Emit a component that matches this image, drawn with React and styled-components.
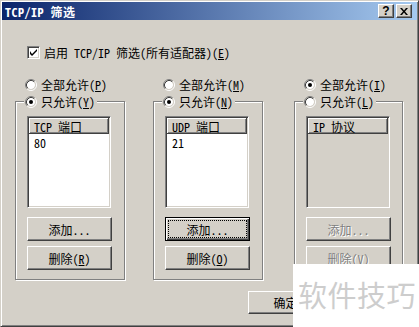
import React from 'react';
import styled, { createGlobalStyle, css } from 'styled-components';

const FACE = '#d4d0c8';
const FONT = `"Noto Sans Mono CJK SC", "Noto Sans CJK SC", "Liberation Mono", monospace`;

const GlobalStyle = createGlobalStyle`
  html, body {
    margin: 0;
    padding: 0;
    background: ${FACE};
  }
  body {
    width: 419px;
    height: 327px;
    overflow: hidden;
  }
`;

const Window = styled.div`
  position: relative;
  box-sizing: border-box;
  width: 419px;
  height: 327px;
  padding: 1px;
  background: ${FACE};
  border: 1px solid;
  border-color: ${FACE} #404040 #404040 ${FACE};
  box-shadow: inset 1px 1px #fff, inset -1px -1px #808080;
  font-family: ${FONT};
  font-size: 12px;
  line-height: 13px;
  color: #000;
  display: flex;
  flex-direction: column;
`;

const TitleBar = styled.div`
  height: 18px;
  flex: none;
  display: flex;
  align-items: center;
  padding: 0 5px 0 3px;
  background: linear-gradient(to right, #0a246a, #a6caf0);
`;

const Title = styled.div`
  flex: 1;
  color: #fff;
  font-weight: bold;
  letter-spacing: 0.5px;
`;

const CaptionButton = styled.div`
  box-sizing: border-box;
  width: 16px;
  height: 14px;
  margin-left: 2px;
  background: ${FACE};
  border: 1px solid;
  border-color: #fff #404040 #404040 #fff;
  box-shadow: inset -1px -1px #808080;
  display: flex;
  align-items: center;
  justify-content: center;
  font-family: "Liberation Sans", sans-serif;
  font-weight: bold;
  font-size: 12px;
  line-height: 12px;
`;

const CheckRow = styled.div`
  display: flex;
  align-items: center;
  gap: 4px;
  margin: 26px 0 0 25px;
  height: 13px;
`;

const CheckBox = styled.div`
  box-sizing: border-box;
  width: 13px;
  height: 13px;
  background: #fff;
  border: 1px solid;
  border-color: #808080 #fff #fff #808080;
  box-shadow: inset 1px 1px #404040, inset -1px -1px ${FACE};
  display: flex;
  align-items: center;
  justify-content: center;
`;

const Columns = styled.div`
  display: flex;
  align-items: flex-start;
  margin-top: 19px;
`;

const Column = styled.div`
  box-sizing: border-box;
  width: ${(p) => p.$width}px;
  margin-left: ${(p) => p.$offset}px;
  display: flex;
  flex-direction: column;
`;

const RadioLine = styled.label`
  display: flex;
  align-items: center;
  gap: 4px;
  height: 13px;
  white-space: nowrap;
`;

const TopRadio = styled(RadioLine)`
  margin-left: 10px;
`;

const Group = styled.fieldset`
  box-sizing: border-box;
  margin: 4px 0 0 0;
  padding: 0 12px 9px 11px;
  min-width: 0;
  border: 1px solid #808080;
  box-shadow: inset 1px 1px #fff, 1px 1px #fff;
  display: flex;
  flex-direction: column;
`;

const Legend = styled.legend`
  margin-left: -3px;
  padding: 0 2px 0 1px;
  background: ${FACE};
  line-height: 13px;
`;

const ListBox = styled.div`
  box-sizing: border-box;
  width: 84px;
  height: 92px;
  margin-top: 8px;
  border: 1px solid;
  border-color: #808080 #fff #fff #808080;
  box-shadow: inset 1px 1px #404040, inset -1px -1px ${FACE};
  background: ${(p) => (p.$disabled ? FACE : '#fff')};
  padding: 1px;
  display: flex;
  flex-direction: column;
`;

const ListHeader = styled.div`
  box-sizing: border-box;
  height: 16px;
  padding: 1px 0 0 5px;
  background: ${FACE};
  border-right: 1px solid #404040;
  border-bottom: 1px solid #404040;
  box-shadow: inset 1px 1px #fff, inset -1px -1px #808080;
  display: flex;
  align-items: center;
`;

const ListRow = styled.div`
  height: 14px;
  padding: 1px 0 0 5px;
  display: flex;
  align-items: center;
`;

const Button = styled.div`
  position: relative;
  box-sizing: border-box;
  width: ${(p) => p.$width || 85}px;
  height: ${(p) => p.$height || 24}px;
  margin-top: ${(p) => p.$top || 0}px;
  background: ${FACE};
  border: 1px solid;
  border-color: #fff #404040 #404040 #fff;
  box-shadow: inset -1px -1px #808080;
  display: flex;
  align-items: center;
  justify-content: center;
  white-space: nowrap;
  ${(p) =>
    p.$disabled &&
    css`
      color: #808080;
      text-shadow: 1px 1px #fff;
    `}
  ${(p) =>
    p.$focused &&
    css`
      border: 1px solid #000;
      box-shadow: inset 1px 1px #fff, inset -1px -1px #404040, inset -2px -2px #808080;
    `}
`;

const FocusRing = styled.span`
  box-sizing: border-box;
  width: 77px;
  height: 16px;
  padding-top: 1px;
  outline: 1px dotted #000;
  display: flex;
  align-items: center;
  justify-content: center;
`;

const ButtonRow = styled.div`
  display: flex;
  margin-top: 11px;
  padding-left: 246px;
`;

const Watermark = styled.div`
  position: absolute;
  left: 292px;
  top: 263px;
  right: -1px;
  bottom: -1px;
  background: #fff;
  display: flex;
  align-items: center;
  padding: 0 0 2px 5px;
  font-family: "Noto Sans CJK SC", sans-serif;
  font-size: 29px;
  line-height: 1;
  letter-spacing: 0.5px;
  color: #cdcdcd;
`;

function Accel({ children }) {
  return (
    <span>
      (<u>{children}</u>)
    </span>
  );
}

function Radio({ checked, disabled }) {
  return (
    <svg width="12" height="12" viewBox="0 0 12 12">
      <circle cx="6" cy="6" r="4" fill={disabled ? FACE : '#fff'} />
      <path d="M2.11 9.89 A5.5 5.5 0 0 1 9.89 2.11" fill="none" stroke="#808080" />
      <path d="M9.89 2.11 A5.5 5.5 0 0 1 2.11 9.89" fill="none" stroke="#fff" />
      <path d="M2.82 9.18 A4.5 4.5 0 0 1 9.18 2.82" fill="none" stroke="#404040" />
      <path d="M9.18 2.82 A4.5 4.5 0 0 1 2.82 9.18" fill="none" stroke={FACE} />
      {checked && <circle cx="6" cy="6" r="2" fill="#000" />}
    </svg>
  );
}

function FilterGroup({ offset, width, allKey, onlyKey, header, rows, allChecked, disabled, addFocused, delKey }) {
  return (
    <Column $offset={offset} $width={width}>
      <TopRadio>
        <Radio checked={allChecked} />
        <span>
          全部允许<Accel>{allKey}</Accel>
        </span>
      </TopRadio>
      <Group>
        <Legend>
          <RadioLine>
            <Radio checked={!allChecked} />
            <span>
              只允许<Accel>{onlyKey}</Accel>
            </span>
          </RadioLine>
        </Legend>
        <ListBox $disabled={disabled}>
          <ListHeader>{header}</ListHeader>
          {rows.map((r) => (
            <ListRow key={r}>{r}</ListRow>
          ))}
        </ListBox>
        <Button $top={9} $disabled={disabled} $focused={addFocused}>
          {addFocused ? <FocusRing>添加...</FocusRing> : '添加...'}
        </Button>
        <Button $top={5} $disabled={disabled}>
          删除<Accel>{delKey}</Accel>
        </Button>
      </Group>
    </Column>
  );
}

function CloseGlyph() {
  return (
    <svg width="8" height="7" viewBox="0 0 8 7">
      <path d="M0 0h2l2 2.5L6 0h2L5 3.5 8 7H6L4 4.5 2 7H0l3-3.5z" fill="#000" />
    </svg>
  );
}

function CheckGlyph() {
  return (
    <svg width="7" height="7" viewBox="0 0 7 7">
      <path d="M0 2v3l2 2 5-5V0L2 5z" fill="#000" />
    </svg>
  );
}

export default function App() {
  return (
    <>
      <GlobalStyle />
      <Window>
        <TitleBar>
          <Title>TCP/IP 筛选</Title>
          <CaptionButton>?</CaptionButton>
          <CaptionButton>
            <CloseGlyph />
          </CaptionButton>
        </TitleBar>

        <CheckRow>
          <CheckBox>
            <CheckGlyph />
          </CheckBox>
          <span>
            启用 TCP/IP 筛选(所有适配器)<Accel>E</Accel>
          </span>
        </CheckRow>

        <Columns>
          <FilterGroup offset={13} width={110} allKey="P" onlyKey="Y" header="TCP 端口" rows={['80']} delKey="R" />
          <FilterGroup
            offset={28}
            width={110}
            allKey="M"
            onlyKey="N"
            header="UDP 端口"
            rows={['21']}
            addFocused
            delKey="O"
          />
          <FilterGroup
            offset={31}
            width={109}
            allKey="I"
            onlyKey="L"
            header="IP 协议"
            rows={[]}
            allChecked
            disabled
            delKey="V"
          />
        </Columns>

        <ButtonRow>
          <Button $width={75} $height={23}>确定</Button>
        </ButtonRow>

        <Watermark>软件技巧</Watermark>
      </Window>
    </>
  );
}
